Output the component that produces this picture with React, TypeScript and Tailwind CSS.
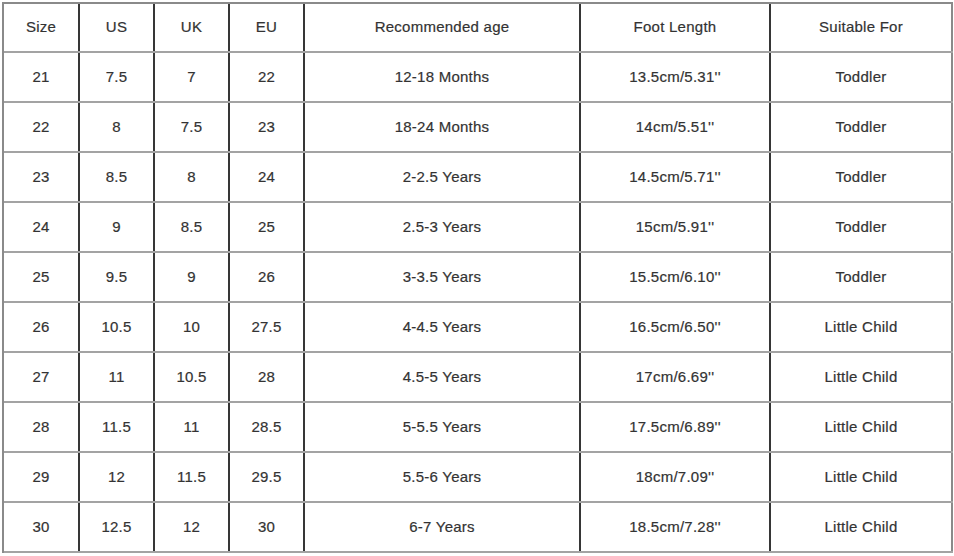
import React from "react";

const widths = ["w-[76px]", "w-[75px]", "w-[75px]", "w-[75px]", "w-[276px]", "w-[190px]", "w-[182px]"];

const header = ["Size", "US", "UK", "EU", "Recommended age", "Foot Length", "Suitable For"];

const rows: string[][] = [
  ["21", "7.5", "7", "22", "12-18 Months", "13.5cm/5.31''", "Toddler"],
  ["22", "8", "7.5", "23", "18-24 Months", "14cm/5.51''", "Toddler"],
  ["23", "8.5", "8", "24", "2-2.5 Years", "14.5cm/5.71''", "Toddler"],
  ["24", "9", "8.5", "25", "2.5-3 Years", "15cm/5.91''", "Toddler"],
  ["25", "9.5", "9", "26", "3-3.5 Years", "15.5cm/6.10''", "Toddler"],
  ["26", "10.5", "10", "27.5", "4-4.5 Years", "16.5cm/6.50''", "Little Child"],
  ["27", "11", "10.5", "28", "4.5-5 Years", "17cm/6.69''", "Little Child"],
  ["28", "11.5", "11", "28.5", "5-5.5 Years", "17.5cm/6.89''", "Little Child"],
  ["29", "12", "11.5", "29.5", "5.5-6 Years", "18cm/7.09''", "Little Child"],
  ["30", "12.5", "12", "30", "6-7 Years", "18.5cm/7.28''", "Little Child"],
];

function Row({ cells, header: isHeader }: { cells: string[]; header?: boolean }) {
  return (
    <div className={`flex border-b-2 border-[#a3a3a3] ${isHeader ? "h-[49px]" : "h-[50px]"}`}>
      {cells.map((c, i) => (
        <div
          key={i}
          className={`${widths[i]} flex items-center justify-center border-r-2 ${
            i === cells.length - 1 ? "border-[#8a8a8a]" : "border-[#363636]"
          }`}
        >
          {c}
        </div>
      ))}
    </div>
  );
}

export default function App() {
  return (
    <div className="w-[954px] h-[556px] bg-white pt-[2px] pl-[2px] text-[15px] tracking-[0.25px] text-[#333333] [-webkit-text-stroke:0.2px_#333333] font-['Liberation_Sans',Arial,sans-serif]">
      <div className="w-fit border-t-2 border-l-2 border-[#8a8a8a]">
        <Row cells={header} header />
        {rows.map((r, i) => (
          <Row key={i} cells={r} />
        ))}
      </div>
    </div>
  );
}
